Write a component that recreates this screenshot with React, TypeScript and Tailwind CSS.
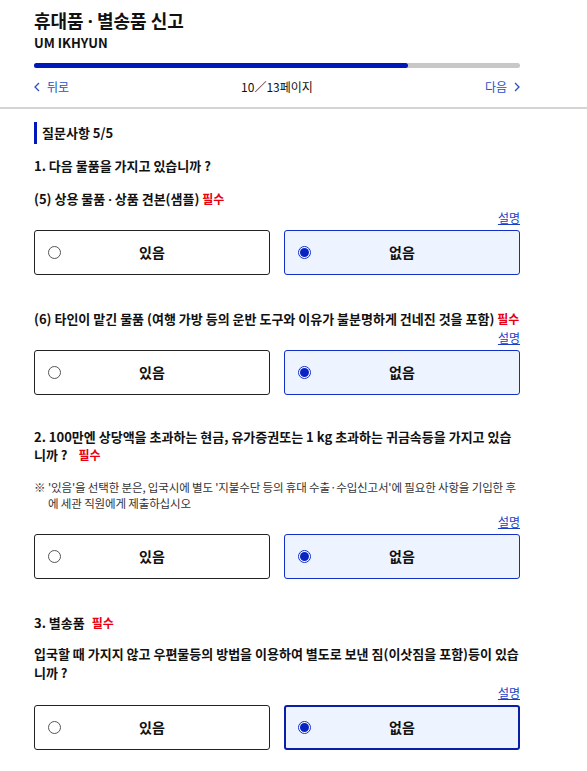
const font = { fontFamily: '"Noto Sans CJK KR", "Noto Sans", sans-serif' };

// the CJK font draws "·" full-width; the reference shows a narrow one
function Dot() {
  return <span style={{ fontFamily: '"Noto Sans", sans-serif' }}>·</span>;
}

function Chevron({ dir }: { dir: "left" | "right" }) {
  return (
    <svg width="6" height="10" viewBox="0 0 6 10" fill="none" stroke="currentColor" strokeWidth="1.3">
      <path d={dir === "left" ? "M5 1 1 5l4 4" : "M1 1l4 4-4 4"} />
    </svg>
  );
}

function Required({ className = "" }: { className?: string }) {
  return <span className={`inline-block text-[12px] font-bold text-[#e60012] ${className}`}>필수</span>;
}

function ChoiceRow({ strong = false, className = "mt-[1px]" }: { strong?: boolean; className?: string }) {
  return (
    <div className={className}>
      <div className="flex justify-end">
        <a className="text-[12px] leading-[16px] text-[#1a3fc7] underline">설명</a>
      </div>
      <div className="mt-[4px] grid grid-cols-2 gap-[14px]">
        <div className="relative flex h-[45px] items-center justify-center rounded-[3px] border border-[#222] bg-white">
          <span className="absolute left-[13px] h-[13px] w-[13px] rounded-full border border-[#555] bg-white" />
          <span className="text-[14px] font-bold text-[#111]">있음</span>
        </div>
        <div
          className={`relative flex h-[45px] items-center justify-center rounded-[3px] bg-[#eef4ff] ${
            strong ? "border-2 border-[#0a1fa8]" : "border border-[#1030c8]"
          }`}
        >
          <span
            className={`absolute ${strong ? "left-[12px]" : "left-[13px]"} flex h-[13px] w-[13px] items-center justify-center rounded-full border border-[#1030c8] bg-white`}
          >
            <span className="h-[9px] w-[9px] rounded-full bg-[#0a24c2]" />
          </span>
          <span className="text-[14px] font-bold text-[#111]">없음</span>
        </div>
      </div>
    </div>
  );
}

export default function App() {
  return (
    <div className="min-h-[771px] bg-white text-[#111]" style={font}>
      <header className="pt-[8px]">
        <div className="w-[486px] ml-[34px]">
          <h1 className="text-[18px] font-bold leading-[24px]">
            휴대품 <Dot /> 별송품 신고
          </h1>
          <p className="mt-[1px] text-[13px] font-bold leading-[18px]">UM IKHYUN</p>
          <div className="mt-[11px] h-[5px] w-full rounded-full bg-[#c8c8c8]">
            <div className="h-full rounded-full bg-[#0019b8]" style={{ width: `${(10 / 13) * 100}%` }} />
          </div>
          <div className="mt-[10px] flex items-center justify-between pb-[11px] text-[12px] leading-[18px]">
            <button className="flex items-center gap-[7px] text-[#2a4fc4]">
              <Chevron dir="left" />
              뒤로
            </button>
            <span className="text-[#111]">10／13페이지</span>
            <button className="flex items-center gap-[7px] text-[#2a4fc4]">
              다음
              <Chevron dir="right" />
            </button>
          </div>
        </div>
      </header>
      <div className="h-[2px] bg-[#d4d4d4]" />

      <main className="ml-[34px] w-[486px] pt-[13px]">
        <h2 className="border-l-[3px] border-[#0019b8] pl-[5px] text-[13px] font-bold leading-[22px]">질문사항 5/5</h2>

        <p className="mt-[12px] text-[13px] font-bold leading-[20px]">1. 다음 물품을 가지고 있습니까 ?</p>
        <p className="mt-[13px] text-[13px] font-bold leading-[20px]">
          (5) 상용 물품 <Dot /> 상품 견본(샘플) <Required />
        </p>
        <ChoiceRow />

        <p className="mt-[34px] text-[13px] font-bold leading-[20px]">
          (6) 타인이 맡긴 물품 (여행 가방 등의 운반 도구와 이유가 불분명하게 건네진 것을 포함) <Required />
        </p>
        <ChoiceRow />

        <p className="mt-[33px] text-[13px] font-bold leading-[18px]">
          2. 100만엔 상당액을 초과하는 현금, 유가증권또는 1 kg 초과하는 귀금속등을 가지고 있습니까 ?{" "}
          <Required className="ml-[8px]" />
        </p>
        <div className="mt-[15px] flex text-[11.5px] leading-[16px] tracking-[-0.15px] text-[#333]">
          <span className="w-[14px] shrink-0">※</span>
          <span className="break-all">
            '있음'을 선택한 분은, 입국시에 별도 '지불수단 등의 휴대 수출·수입신고서'에 필요한 사항을 기입한 후에 세관 직원에게 제출하십시오
          </span>
        </div>
        <ChoiceRow className="mt-[3px]" />

        <p className="mt-[34px] text-[13px] font-bold leading-[20px]">
          3. 별송품 <Required className="ml-[4px]" />
        </p>
        <p className="mt-[11px] text-[13px] font-bold leading-[19px]">
          입국할 때 가지지 않고 우편물등의 방법을 이용하여 별도로 보낸 짐(이삿짐을 포함)등이 있습니까 ?
        </p>
        <ChoiceRow strong className="mt-[3px]" />
      </main>
    </div>
  );
}
